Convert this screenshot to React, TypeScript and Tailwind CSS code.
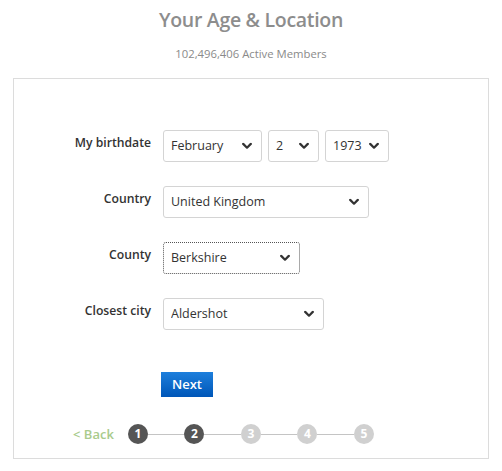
import { ChangeEvent, useState } from 'react';

const months = ['January', 'February', 'March', 'April', 'May', 'June', 'July', 'August', 'September', 'October', 'November', 'December'];

function Chevron() {
  return (
    <svg className="pointer-events-none absolute right-[10px] top-1/2 -translate-y-1/2" width="10" height="7" viewBox="0 0 10 7">
      <path d="M1.2 1.4 L5 5.2 L8.8 1.4" fill="none" stroke="#333" strokeWidth="2.2" strokeLinecap="round" strokeLinejoin="round" />
    </svg>
  );
}

function Dropdown({ value, options, width, focused, onChange }: { value: string; options: string[]; width: string; focused?: boolean; onChange: (v: string) => void }) {
  return (
    <div className={`relative h-[32px] ${width}`}>
      <select
        value={value}
        onChange={(e: ChangeEvent<HTMLSelectElement>) => onChange(e.target.value)}
        className={`h-full w-full appearance-none rounded-[3px] bg-white pl-[7px] text-[12.5px] text-[#333] outline-none ${focused ? 'border border-dotted border-[#555]' : 'border border-[#d4d4d4]'}`}
      >
        {options.map((o) => (
          <option key={o}>{o}</option>
        ))}
      </select>
      <Chevron />
    </div>
  );
}

function Row({ label, children }: { label: string; children: React.ReactNode }) {
  return (
    <div className="flex items-start">
      <div className="w-[149px] pr-[12px] pt-[4px] text-right text-[12.2px] font-semibold text-[#333]">{label}</div>
      <div className="flex gap-[6px]">{children}</div>
    </div>
  );
}

function App() {
  const [month, setMonth] = useState('February');
  const [day, setDay] = useState('2');
  const [year, setYear] = useState('1973');
  const [country, setCountry] = useState('United Kingdom');
  const [county, setCounty] = useState('Berkshire');
  const [city, setCity] = useState('Aldershot');

  const days = Array.from({ length: 31 }, (_, i) => String(i + 1));
  const years = Array.from({ length: 80 }, (_, i) => String(2005 - i));

  return (
    <div className="h-[471px] w-[502px] bg-white font-['Open_Sans',sans-serif]">
      <h1 className="pt-[6px] text-center text-[19.5px] font-semibold leading-[28px] tracking-[-0.3px] text-[#8d8d8d]">Your Age &amp; Location</h1>
      <p className="mt-[12px] text-center text-[11.3px] leading-[16px] text-[#8a8a8a]">102,496,406 Active Members</p>

      <div className="mx-[13px] mt-[16px] h-[381px] border border-[#dcdcdc] pt-[51px]">
        <div className="flex flex-col gap-[24px]">
          <Row label="My birthdate">
            <Dropdown value={month} options={months} width="w-[99px]" onChange={setMonth} />
            <Dropdown value={day} options={days} width="w-[51px]" onChange={setDay} />
            <Dropdown value={year} options={years} width="w-[64px]" onChange={setYear} />
          </Row>
          <Row label="Country">
            <Dropdown value={country} options={['United Kingdom', 'United States', 'Ireland']} width="w-[206px]" onChange={setCountry} />
          </Row>
          <Row label="County">
            <Dropdown value={county} options={['Berkshire', 'Surrey', 'Kent']} width="w-[137px]" focused onChange={setCounty} />
          </Row>
          <Row label="Closest city">
            <Dropdown value={city} options={['Aldershot', 'Reading', 'Slough']} width="w-[161px]" onChange={setCity} />
          </Row>
        </div>

        <div className="ml-[147px] mt-[41px]">
          <button className="h-[25px] w-[52px] bg-gradient-to-b from-[#1d7fdc] to-[#0056b8] text-[13px] font-semibold text-white">Next</button>
        </div>

        <div className="ml-[59px] mt-[27px] flex items-center">
          <span className="mr-[14px] text-[13px] font-semibold text-[#a9cb8c]">&lt; Back</span>
          {[1, 2, 3, 4, 5].map((n) => (
            <div key={n} className="flex items-center">
              {n > 1 && <div className="h-px w-[36.5px] bg-[#c4c4c4]" />}
              <div className={`flex h-[20px] w-[20px] items-center justify-center rounded-full text-[12px] font-bold text-white ${n <= 2 ? 'bg-[#555]' : 'bg-[#d0d0d0]'}`}>{n}</div>
            </div>
          ))}
        </div>
      </div>
    </div>
  );
}

export default App;
